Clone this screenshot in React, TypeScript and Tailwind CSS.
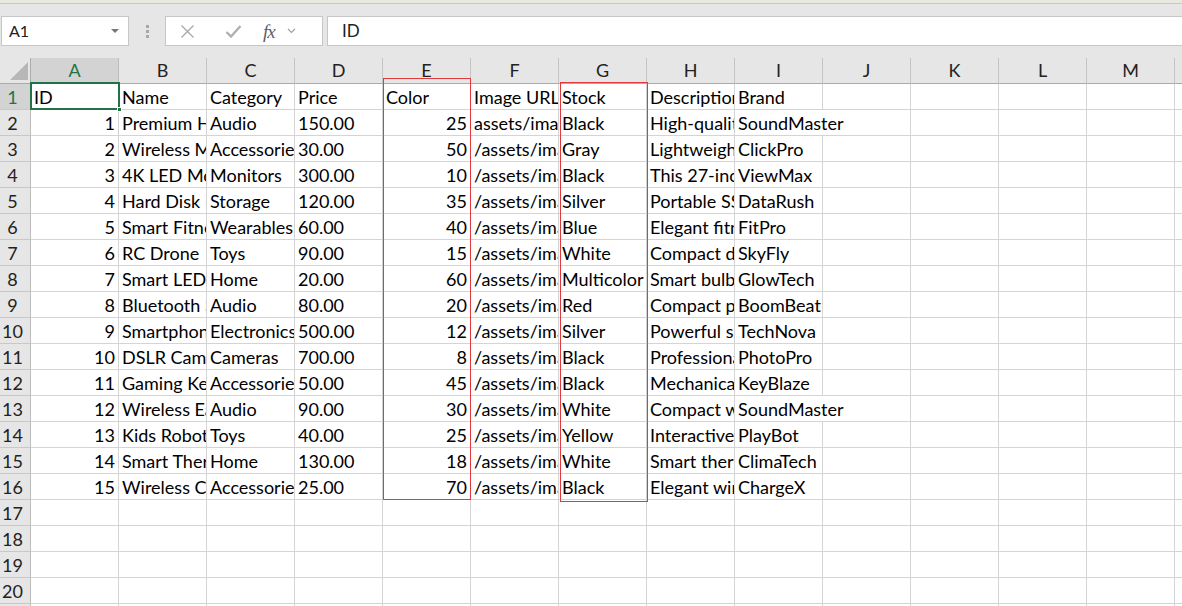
import React from "react";

const COLS = ["A", "B", "C", "D", "E", "F", "G", "H", "I", "J", "K", "L", "M"];

const HEAD = ["ID", "Name", "Category", "Price", "Color", "Image URL", "Stock", "Description", "Brand"];

// id, name, category, price, stock, image, colour, description, brand
const DATA: [number, string, string, string, number, string, string, string, string][] = [
  [1, "Premium Headphones", "Audio", "150.00", 25, "assets/images/headphones.jpg", "Black", "High-quality wireless headphones", "SoundMaster"],
  [2, "Wireless Mouse", "Accessories", "30.00", 50, "/assets/images/mouse.jpg", "Gray", "Lightweight ergonomic mouse", "ClickPro"],
  [3, "4K LED Monitor", "Monitors", "300.00", 10, "/assets/images/monitor.jpg", "Black", "This 27-inch 4K monitor", "ViewMax"],
  [4, "Hard Disk Drive", "Storage", "120.00", 35, "/assets/images/hdd.jpg", "Silver", "Portable SSD storage", "DataRush"],
  [5, "Smart Fitness Band", "Wearables", "60.00", 40, "/assets/images/band.jpg", "Blue", "Elegant fitness tracker", "FitPro"],
  [6, "RC Drone", "Toys", "90.00", 15, "/assets/images/drone.jpg", "White", "Compact drone with camera", "SkyFly"],
  [7, "Smart LED Bulb", "Home", "20.00", 60, "/assets/images/bulb.jpg", "Multicolor", "Smart bulb with app control", "GlowTech"],
  [8, "Bluetooth Speaker", "Audio", "80.00", 20, "/assets/images/speaker.jpg", "Red", "Compact portable speaker", "BoomBeat"],
  [9, "Smartphone X", "Electronics", "500.00", 12, "/assets/images/phone.jpg", "Silver", "Powerful smartphone", "TechNova"],
  [10, "DSLR Camera", "Cameras", "700.00", 8, "/assets/images/camera.jpg", "Black", "Professional DSLR camera", "PhotoPro"],
  [11, "Gaming Keyboard", "Accessories", "50.00", 45, "/assets/images/keyboard.jpg", "Black", "Mechanical RGB keyboard", "KeyBlaze"],
  [12, "Wireless Earbuds", "Audio", "90.00", 30, "/assets/images/earbuds.jpg", "White", "Compact wireless earbuds", "SoundMaster"],
  [13, "Kids Robot Kit", "Toys", "40.00", 25, "/assets/images/robot.jpg", "Yellow", "Interactive learning robot", "PlayBot"],
  [14, "Smart Thermostat", "Home", "130.00", 18, "/assets/images/thermostat.jpg", "White", "Smart thermostat control", "ClimaTech"],
  [15, "Wireless Charger", "Accessories", "25.00", 70, "/assets/images/charger.jpg", "Black", "Elegant wireless charger", "ChargeX"],
];

type Cell = { v: string; right?: boolean };

function buildRows(): Cell[][] {
  const out: Cell[][] = [HEAD.map((v) => ({ v }))];
  for (const r of DATA) {
    out.push([
      { v: String(r[0]), right: true },
      { v: r[1] },
      { v: r[2] },
      { v: r[3] },
      { v: String(r[4]), right: true },
      { v: r[5] },
      { v: r[6] },
      { v: r[7] },
      { v: r[8] },
    ]);
  }
  while (out.length < 21) out.push([]);
  return out;
}

function FormulaBar() {
  return (
    <div className="bg-[#e6e6e6] h-[58px] flex flex-col">
      <div className="h-[3px] bg-[#e9e8df]" />
      <div className="h-px bg-[#e2cf63]" />
      <div className="flex mt-[12px] h-[30px]">
        {/* name box */}
        <div className="ml-px w-[128px] bg-white border border-[#c6c6c6] flex items-center justify-between pl-[7px] pr-[9px] text-[16px] text-[#222]">
          <span>A1</span>
          <span className="w-0 h-0 border-l-[4px] border-r-[4px] border-t-[4px] border-l-transparent border-r-transparent border-t-[#777]" />
        </div>
        {/* grip dots */}
        <div className="w-[36px] flex flex-col items-center justify-center gap-[2px]">
          <span className="w-[3px] h-[3px] bg-[#a8a8a8]" />
          <span className="w-[3px] h-[3px] bg-[#a8a8a8]" />
          <span className="w-[3px] h-[3px] bg-[#a8a8a8]" />
        </div>
        {/* cancel / enter / fx */}
        <div className="w-[158px] bg-white border border-[#c6c6c6] flex items-center">
          <svg className="ml-[14px]" width="15" height="15" viewBox="0 0 15 15">
            <path d="M1.5 1.5 L13.5 13.5 M13.5 1.5 L1.5 13.5" stroke="#a9a9a9" strokeWidth="1.4" fill="none" />
          </svg>
          <svg className="ml-[30px]" width="17" height="15" viewBox="0 0 17 15">
            <path d="M1.5 8 L6 12.5 L15.5 2" stroke="#b0b0b0" strokeWidth="2.4" fill="none" />
          </svg>
          <span className="ml-[21px] font-['Liberation_Serif',serif] italic text-[19px] leading-none text-[#5f5f5f] tracking-[-1px]">fx</span>
          <svg className="ml-[12px]" width="9" height="6" viewBox="0 0 9 6">
            <path d="M1 1 L4.5 4.5 L8 1" stroke="#a0a0a0" strokeWidth="1.2" fill="none" />
          </svg>
        </div>
        {/* input */}
        <div className="flex-1 ml-[4px] bg-white border-y border-l border-[#c6c6c6] flex items-center pl-[14px] text-[17px] text-[#222]">
          ID
        </div>
      </div>
    </div>
  );
}

function Sheet() {
  const rows = buildRows();
  return (
    <div className="relative grid grid-cols-[31px_repeat(13,88px)_1fr] bg-white">
      {/* column headers */}
      <div className="relative h-[26px] bg-[#e6e6e6] border-r border-b border-[#ababab]">
        <svg className="absolute left-[10px] top-[4px]" width="18" height="18" viewBox="0 0 18 18">
          <path d="M18 0 L18 18 L0 18 Z" fill="#b7b7b7" />
        </svg>
      </div>
      {COLS.map((c, i) => (
        <div
          key={c}
          className={
            i === 0
              ? "h-[26px] bg-[#d3d3d3] border-r border-b border-r-[#bdbdbd] border-b-[#ababab] flex items-center justify-center text-[18px] text-[#217346]"
              : "h-[26px] bg-[#e6e6e6] border-r border-b border-r-[#c4c4c4] border-b-[#ababab] flex items-center justify-center text-[18px] text-[#222]"
          }
        >
          {c}
        </div>
      ))}
      <div className="h-[26px] bg-[#e6e6e6] border-b border-[#ababab]" />

      {rows.map((r, ri) => (
        <React.Fragment key={ri}>
          <div
            className={
              ri === 0
                ? "h-[26px] bg-[#d3d3d3] border-r border-b border-r-[#bdbdbd] border-b-[#c8c8c8] flex items-end justify-center pr-[5px] pb-[1px] text-[18px] leading-[22px] text-[#217346]"
                : "h-[26px] bg-[#e6e6e6] border-r border-b border-r-[#bdbdbd] border-b-[#c8c8c8] flex items-end justify-center pr-[5px] pb-[1px] text-[18px] leading-[22px] text-[#222]"
            }
          >
            {ri + 1}
          </div>
          {COLS.map((c, ci) => {
            const cell = r[ci];
            const nextEmpty = !r[ci + 1];
            const spill = !!cell && nextEmpty && !cell.right;
            const hideLine = spill && cell.v.length >= 11;
            return (
              <div
                key={c}
                className={[
                  "h-[26px] border-b border-[#d4d4d4] flex items-end pb-[1px] text-[18px] leading-[22px] text-black whitespace-nowrap",
                  hideLine ? "" : "border-r",
                  spill ? "overflow-visible relative z-10" : "overflow-hidden",
                  cell?.right ? "justify-end pr-[3px]" : "pl-[3px]",
                ].join(" ")}
              >
                {cell ? cell.v : ""}
              </div>
            );
          })}
          <div className="h-[26px] border-b border-[#d4d4d4]" />
        </React.Fragment>
      ))}

      {/* selected cell A1 */}
      <div className="absolute left-[30px] top-[24px] w-[90px] h-[28px] border-2 border-[#217346] z-20" />
      <div className="absolute left-[117px] top-[49px] w-[5px] h-[5px] bg-[#217346] border border-white z-20" />

      {/* red highlight boxes */}
      <div className="absolute left-[383px] top-[20px] w-[88px] h-[422px] border border-[#e0393e] z-20" />
      <div className="absolute left-[560px] top-[24px] w-[88px] h-[420px] border border-[#e0393e] z-20" />
    </div>
  );
}

export default function App() {
  return (
    <div className="w-[1182px] h-[606px] overflow-hidden bg-white font-['Lato','Liberation_Sans',sans-serif]">
      <FormulaBar />
      <Sheet />
    </div>
  );
}
